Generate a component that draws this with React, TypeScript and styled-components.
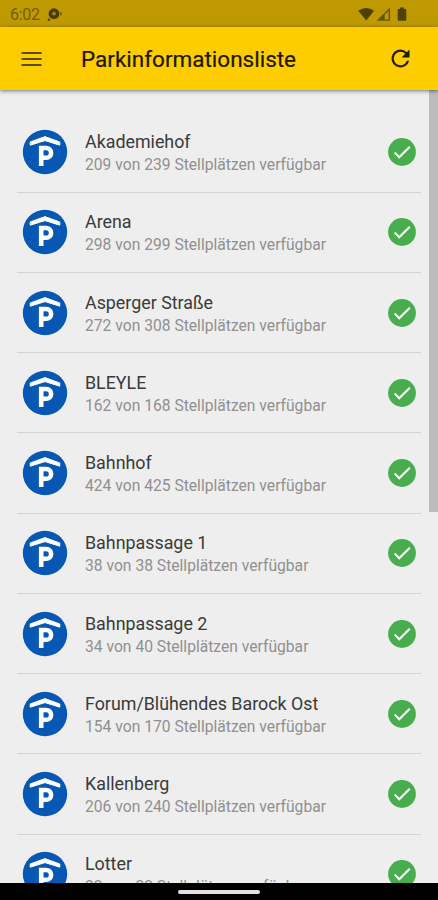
import React from 'react';
import styled, { createGlobalStyle } from 'styled-components';

const GlobalStyle = createGlobalStyle`
  * { box-sizing: border-box; }
  body { margin: 0; background: #eeeeee; font-family: Roboto, "Liberation Sans", sans-serif; }
`;

const Screen = styled.div`
  width: 438px;
  height: 900px;
  display: flex;
  flex-direction: column;
  overflow: hidden;
  background: #eeeeee;
`;

const StatusBar = styled.div`
  flex: none;
  height: 27px;
  padding: 2px 30px 0 10px;
  display: flex;
  align-items: center;
  background: #bf9900;
  color: #745c00;
  font-size: 16px;
`;

const Clock = styled.span`
  width: 37px;
  letter-spacing: -0.3px;
`;

const StatusIcons = styled.div`
  margin-left: auto;
  display: flex;
  align-items: center;
`;

const AppBar = styled.header`
  flex: none;
  position: relative;
  height: 63px;
  padding: 0 24px 0 21px;
  display: flex;
  align-items: center;
  background: #fdcd00;
  box-shadow: 0 1px 4px rgba(0, 0, 0, 0.5);
`;

const IconButton = styled.button`
  display: flex;
  padding: 0;
  border: 0;
  background: none;
`;

const Title = styled.h1`
  flex: 1;
  margin: 1px 0 0 39px;
  font-size: 22.5px;
  line-height: 28px;
  font-weight: 400;
  color: #1c1703;
  white-space: nowrap;
  -webkit-text-stroke: 0.2px #1c1703;
`;

const Content = styled.main`
  flex: 1;
  min-height: 0;
  display: flex;
  overflow: hidden;
`;

const List = styled.ul`
  flex: 1;
  list-style: none;
  margin: 0;
  padding: 22.4px 8px 0 17px;
`;

const Row = styled.li`
  height: 80.26px;
  padding: 0 5px;
  display: flex;
  align-items: center;
  border-bottom: 1px solid #d4d4d4;
`;

const Labels = styled.div`
  flex: 1;
  margin-left: 17px;
  padding-top: 2px;
  white-space: nowrap;
`;

const Name = styled.div`
  font-size: 17.85px;
  line-height: 23px;
  color: #3a3a3a;
`;

const Availability = styled.div`
  font-size: 15.65px;
  line-height: 23px;
  color: #909090;
`;

const ScrollTrack = styled.div`
  width: 9px;
`;

const ScrollThumb = styled.div`
  height: 422px;
  background: #bcbcbc;
`;

const NavigationBar = styled.div`
  flex: none;
  height: 17px;
  display: flex;
  justify-content: center;
  padding-top: 7px;
  background: #000000;
`;

const HomeHandle = styled.div`
  width: 82px;
  height: 4px;
  border-radius: 2px;
  background: #e3dfe3;
`;

const lots: { name: string; free: number; total: number }[] = [
  { name: 'Akademiehof', free: 209, total: 239 },
  { name: 'Arena', free: 298, total: 299 },
  { name: 'Asperger Straße', free: 272, total: 308 },
  { name: 'BLEYLE', free: 162, total: 168 },
  { name: 'Bahnhof', free: 424, total: 425 },
  { name: 'Bahnpassage 1', free: 38, total: 38 },
  { name: 'Bahnpassage 2', free: 34, total: 40 },
  { name: 'Forum/Blühendes Barock Ost', free: 154, total: 170 },
  { name: 'Kallenberg', free: 206, total: 240 },
  { name: 'Lotter', free: 32, total: 32 },
];

const GarageIcon = () => (
  <svg width="46" height="46" viewBox="0 0 46 46" fill="none">
    <circle cx="23" cy="23" r="22.2" fill="#0758b5" />
    <path d="M8.2 13 23 7.600 37.800 13v3.200L23 11.600 8.200 16.200z" fill="#fff" stroke="#fff" strokeWidth="1" strokeLinejoin="round" />
    <path d="M19.200 37V19h5a4.700 4.700 0 0 1 0 9.800h-5" stroke="#fff" strokeWidth="4.600" />
  </svg>
);

const AvailableIcon = () => (
  <svg width="28" height="28" viewBox="0 0 28 28" fill="none">
    <circle cx="14" cy="14" r="13.9" fill="#48ae4d" />
    <path d="m6.700 14.600 4.500 4.600L21.800 8.800" stroke="#fff" strokeWidth="2.200" />
  </svg>
);

const MenuIcon = () => (
  <svg width="21" height="16" viewBox="0 0 21 16" stroke="#5d4c04" strokeWidth="2">
    <path d="M.5 2h20M.5 8h20M.5 14h20" />
  </svg>
);

const RefreshIcon = () => (
  <svg width="27" height="27" viewBox="0 0 24 24" fill="#241d02">
    <path d="M17.65 6.35A7.96 7.96 0 0 0 12 4a8 8 0 1 0 7.73 10h-2.08A6 6 0 1 1 12 6c1.66 0 3.14.69 4.22 1.78L13 11h7V4z" />
  </svg>
);

const NotificationIcon = () => (
  <svg width="16" height="14" viewBox="0 0 16 14">
    <circle cx="7" cy="5.7" r="5.4" fill="#4b3a00" />
    <circle cx="1.900" cy="11.800" r="1.200" fill="#4b3a00" />
    <circle cx="7" cy="5.700" r="1.900" fill="#a78500" />
    <path d="M13.800 3.900v3.600" stroke="#775f00" strokeWidth="1.500" />
  </svg>
);

const SignalIcons = () => (
  <svg width="50" height="15" viewBox="0 0 50 15" fill="#4f4000">
    <path d="M.3 3.800Q8.200-2 16.100 3.800L8.200 13.400z" />
    <path d="M18.500 13.800 32 .6v13.200z" fill="#6b5600" />
    <path d="M26.700 7.800 30.600 4v8.500h-3.900z" fill="#bf9900" />
    <path d="M42 .5h4V2h1.700q.6 0 .6.6v10.600q0 .6-.6.6h-7.400q-.6 0-.6-.6V2.600q0-.6.6-.6H42z" />
  </svg>
);

export default function App() {
  return (
    <Screen>
      <GlobalStyle />
      <StatusBar>
        <Clock>6:02</Clock>
        <NotificationIcon />
        <StatusIcons>
          <SignalIcons />
        </StatusIcons>
      </StatusBar>
      <AppBar>
        <IconButton aria-label="Menü">
          <MenuIcon />
        </IconButton>
        <Title>Parkinformationsliste</Title>
        <IconButton aria-label="Aktualisieren">
          <RefreshIcon />
        </IconButton>
      </AppBar>
      <Content>
        <List>
          {lots.map((lot) => (
            <Row key={lot.name}>
              <GarageIcon />
              <Labels>
                <Name>{lot.name}</Name>
                <Availability>
                  {lot.free} von {lot.total} Stellplätzen verfügbar
                </Availability>
              </Labels>
              <AvailableIcon />
            </Row>
          ))}
        </List>
        <ScrollTrack>
          <ScrollThumb />
        </ScrollTrack>
      </Content>
      <NavigationBar>
        <HomeHandle />
      </NavigationBar>
    </Screen>
  );
}
